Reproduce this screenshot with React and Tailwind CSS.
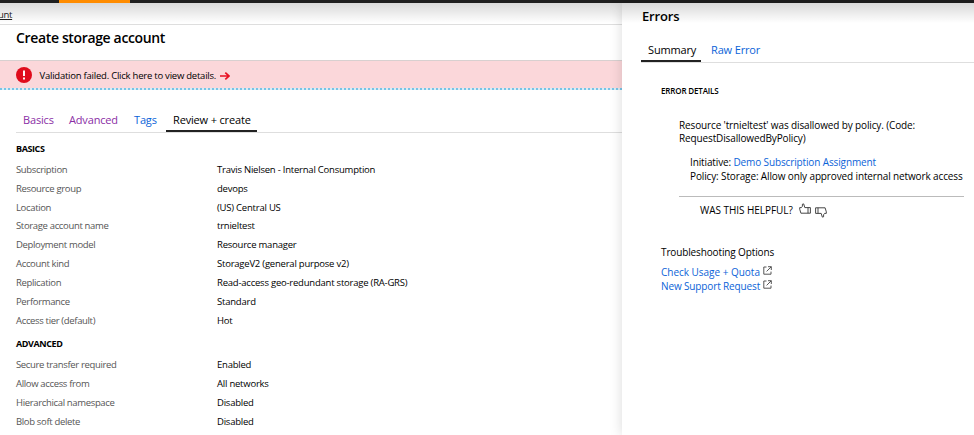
import React from 'react';

const basics = [
  ['Subscription', 'Travis Nielsen - Internal Consumption'],
  ['Resource group', 'devops'],
  ['Location', '(US) Central US'],
  ['Storage account name', 'trnieltest'],
  ['Deployment model', 'Resource manager'],
  ['Account kind', 'StorageV2 (general purpose v2)'],
  ['Replication', 'Read-access geo-redundant storage (RA-GRS)'],
  ['Performance', 'Standard'],
  ['Access tier (default)', 'Hot'],
];

const advanced = [
  ['Secure transfer required', 'Enabled'],
  ['Allow access from', 'All networks'],
  ['Hierarchical namespace', 'Disabled'],
  ['Blob soft delete', 'Disabled'],
];

function Rows({ items }) {
  return (
    <dl className="text-[9.5px]">
      {items.map(([label, value]) => (
        <div key={label} className="flex h-[18.9px] items-center whitespace-nowrap">
          <dt className="w-[201px] tracking-[-0.34px] text-[#555]">{label}</dt>
          <dd className="tracking-[-0.22px] text-black">{value}</dd>
        </div>
      ))}
    </dl>
  );
}

function Thumb({ className }) {
  return (
    <svg viewBox="0 0 12 12" className={className} fill="none" stroke="#333" strokeWidth="0.9">
      <path d="M9 4.600H5.800L4.700.9 3.400 1.200V3.300L2.400 4.600H.7V6.200L1.900 10.200H9Z M9 4.600H11.400V10.200H9" />
    </svg>
  );
}

function ExternalLink() {
  return (
    <svg viewBox="0 0 9 9" className="mb-[3px] ml-[3px] h-[9px] w-[9px]" fill="none" stroke="#444" strokeWidth="0.9">
      <path d="M3.500 1H.8v7.200H8V5.600M5 .7h3.300V4M8.200.8 3.600 5.400" />
    </svg>
  );
}

export default function App() {
  return (
    <div className="relative flex h-[435px] w-[974px] flex-col overflow-hidden bg-white font-['Open_Sans','Noto_Sans',sans-serif] text-black">
      <div className="h-[3px] shrink-0 bg-[#1e1e1e]">
        <div className="ml-[59px] h-[3px] w-[71px] bg-[#ff8c00]" />
      </div>
      <div className="flex min-h-0 flex-1">
        <main className="w-[622px] shrink-0 overflow-hidden">
          <div className="h-[22px] border-b border-[#dedede]">
            <a className="-ml-[2px] block h-[21px] text-[9.5px] leading-[24px] tracking-[-0.3px] text-[#222] underline">unt</a>
          </div>
          <h1 className="h-[35px] pl-4 text-[14px] leading-[25px] font-semibold tracking-[-0.35px]">Create storage account</h1>
          <div className="flex h-[28px] items-center border-t border-[#d8d0d0] bg-[#fbd7da] pl-4 text-[9.5px] tracking-[-0.23px]">
            <svg viewBox="0 0 16 16" className="mr-[7.500px] h-4 w-4">
              <circle cx="8" cy="8" r="8" fill="#e00b1c" />
              <path d="M8 3.500v5.400M8 10.500v1.900" stroke="#fff" strokeWidth="1.900" />
            </svg>
            <span className="pt-[3px]">Validation failed. Click here to view details.</span>
            <svg viewBox="0 0 10 8" className="mt-[2px] ml-1 h-2 w-[10px]" fill="none" stroke="#e81123" strokeWidth="1.700">
              <path d="M0 4h9M5.300.6 8.900 4 5.300 7.400" />
            </svg>
          </div>
          <div className="h-[1.5px] bg-[repeating-linear-gradient(90deg,#78c4e6_0px,#78c4e6_2.500px,#d9ecf5_2.500px,#d9ecf5_4px)]" />
          <nav className="ml-4 flex h-[43.500px] items-end border-b border-[#dedede] text-[11px] tracking-[-0.16px] whitespace-nowrap">
            <a className="ml-[7px] w-[46px] pb-[4px] text-[#8a2da5]">Basics</a>
            <a className="w-[65px] pb-[4px] text-[#8a2da5]">Advanced</a>
            <a className="w-[32px] pb-[4px] text-[#0b63d8]">Tags</a>
            <a className="w-[91px] border-b-2 border-[#222] pb-[2px] pl-[7px]">Review + create</a>
          </nav>
          <section className="pl-4">
            <h2 className="h-[27.500px] text-[9px] leading-[31px] font-bold tracking-[-0.4px]">BASICS</h2>
            <Rows items={basics} />
            <h2 className="h-[25.500px] text-[9px] leading-[26px] font-bold tracking-[-0.4px]">ADVANCED</h2>
            <Rows items={advanced} />
          </section>
        </main>
        <aside className="relative w-[352px] bg-white pl-[20px] shadow-[0_0_12px_rgba(0,0,0,0.15)]">
          <h1 className="h-[34px] text-[13px] leading-[26px] font-semibold tracking-[-0.15px]">Errors</h1>
          <nav className="-ml-px flex h-[26px] items-end border-b border-[#dedede] text-[11px] tracking-[-0.15px] whitespace-nowrap">
            <a className="w-[60px] border-b-2 border-[#222] pb-[2px] pl-[7px]">Summary</a>
            <a className="ml-[10px] pb-[4px] text-[#0b63d8]">Raw Error</a>
          </nav>
          <section className="pl-[19px] text-[10px] tracking-[-0.13px] whitespace-nowrap">
            <h2 className="h-[55.500px] pt-[21px] text-[8px] leading-[13px] font-semibold tracking-[-0.15px]">ERROR DETAILS</h2>
            <div className="mr-[10px] ml-[18px] h-[78.500px] border-b border-[#bbb] leading-[13.500px]">
              <p>Resource &#39;trnieltest&#39; was disallowed by policy. (Code:<br />RequestDisallowedByPolicy)</p>
              <div className="mt-[10.500px] ml-[11px]">
                <p>Initiative: <a className="text-[#0b63d8]">Demo Subscription Assignment</a></p>
                <p>Policy: Storage: Allow only approved internal network access</p>
              </div>
            </div>
            <div className="ml-[39px] flex h-[27px] items-center">
              <span className="tracking-[-0.05px]">WAS THIS HELPFUL?</span>
              <Thumb className="mb-[3px] ml-[6px] h-[12px] w-[12px]" />
              <Thumb className="mt-[2px] ml-[4px] h-[12px] w-[12px] rotate-180" />
            </div>
            <div className="mt-[21px] leading-[14px]">
              <p>Troubleshooting Options</p>
              <a className="mt-[6px] flex items-center text-[#0b63d8]"><span className="tracking-[-0.02px]">Check Usage + Quota</span><ExternalLink /></a>
              <a className="flex items-center text-[#0b63d8]"><span>New Support Request</span><ExternalLink /></a>
            </div>
          </section>
        </aside>
      </div>
      <div className="pointer-events-none absolute inset-x-0 top-[3px] h-[20px] bg-gradient-to-b from-black/15 to-transparent" />
    </div>
  );
}
